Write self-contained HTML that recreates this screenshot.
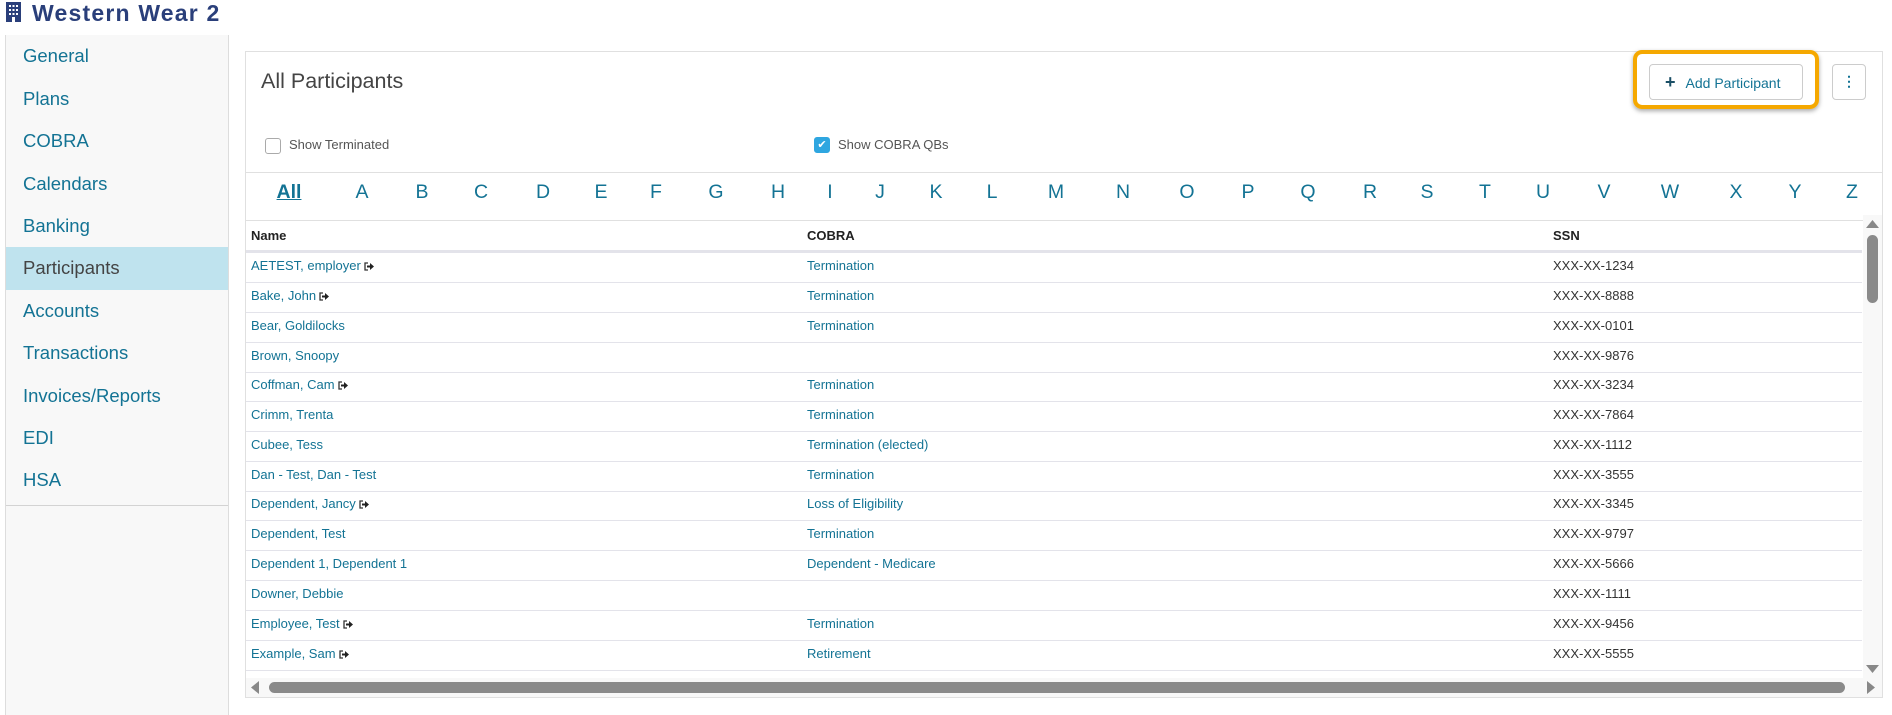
<!DOCTYPE html>
<html><head><meta charset="utf-8"><style>
*{box-sizing:border-box;margin:0;padding:0}
body{width:1892px;height:711px;background:#fff;font-family:"Liberation Sans",Arial,sans-serif;position:relative;overflow:hidden}
.abs{position:absolute}
.title{left:32px;top:0;font-size:23px;font-weight:bold;color:#2a3f7a;letter-spacing:1.2px;line-height:27px}
.side{left:5px;top:35px;width:224px;height:680px;background:#f8f8f8;border-left:1px solid #ddd;border-right:1px solid #ddd}
.side div{position:absolute;left:0;width:222px;height:43px;line-height:41px;padding-left:17px;font-size:18.5px;color:#137394}
.side .act{background:#bfe3ee;color:#444}
.side .div{top:470px;height:1px;background:#d3d3d3;padding:0}
.panel{left:245px;top:51px;width:1638px;height:647px;border:1px solid #e0e0e0}
.h1{left:261px;top:69px;font-size:21.5px;color:#444}
.cb{width:16px;height:16px;border:1px solid #aaa;border-radius:3px;background:#fff}
.cbl{font-size:13px;color:#555}
.letters{left:246px;top:172px;width:1636px;height:49px;border-top:1px solid #e0e0e0;border-bottom:1px solid #e0e0e0}
.lt{position:absolute;top:181px;font-size:19.5px;color:#137394;transform:translateX(-50%)}
.row{position:absolute;left:246px;width:1616px;height:30px;border-bottom:1px solid #e3e3ea;font-size:13px;line-height:25px;color:#137394}
.row span{position:absolute}
.c1{left:5px}.c2{left:561px}.c3{left:1307px;color:#333}
.hd{font-weight:bold;color:#222;border-bottom:3px solid #e3e3ea;line-height:30px}
.ic{display:inline-block;width:10px;height:9px;margin-left:3px;vertical-align:-1px}
</style></head><body>
<svg class="abs" style="left:6px;top:2px" width="15" height="20" viewBox="0 0 15 20"><rect width="15" height="20" fill="#2a3f7a"/><g fill="#fff"><rect x="3" y="3" width="2" height="2"/><rect x="6.5" y="3" width="2" height="2"/><rect x="10" y="3" width="2" height="2"/><rect x="3" y="7" width="2" height="2"/><rect x="6.5" y="7" width="2" height="2"/><rect x="10" y="7" width="2" height="2"/><rect x="3" y="11" width="2" height="2"/><rect x="6.5" y="11" width="2" height="2"/><rect x="10" y="11" width="2" height="2"/><rect x="6" y="15" width="3" height="5"/></g></svg>
<div class="abs title">Western Wear 2</div>
<div class="abs side">
<div style="top:0">General</div><div style="top:43px">Plans</div><div style="top:85px">COBRA</div><div style="top:128px">Calendars</div><div style="top:170px">Banking</div><div class="act" style="top:212px">Participants</div><div style="top:255px">Accounts</div><div style="top:297px">Transactions</div><div style="top:340px">Invoices/Reports</div><div style="top:382px">EDI</div><div style="top:424px">HSA</div><div class="div"></div>
</div>
<div class="abs panel"></div>
<div class="abs h1">All Participants</div>
<div class="abs" style="left:1633px;top:50px;width:186px;height:59px;border:4px solid #f5a800;border-radius:9px;box-shadow:0 2px 5px rgba(0,0,0,.35)"></div>
<div class="abs" style="left:1649px;top:64px;width:154px;height:36px;border:1px solid #ccc;border-radius:4px;font-size:14px;color:#137394;line-height:34px;padding-left:15px"><b style="color:#1a4f66;font-size:18px;margin-right:10px">+</b>Add Participant</div>
<div class="abs" style="left:1832px;top:64px;width:34px;height:36px;border:1px solid #ccc;border-radius:4px;text-align:center;line-height:32px;color:#137394;font-weight:bold;font-size:14px">⋮</div>
<div class="abs cb" style="left:265px;top:138px"></div>
<div class="abs cbl" style="left:289px;top:137px">Show Terminated</div>
<div class="abs cb" style="left:814px;top:137px;background:#2fa6e0;border-color:#2fa6e0;color:#fff;font-size:11px;text-align:center;line-height:14px">✔</div>
<div class="abs cbl" style="left:838px;top:137px">Show COBRA QBs</div>
<div class="abs letters"></div>
<div class="lt" style="left:289px;font-weight:bold;text-decoration:underline">All</div>
<div class="lt" style="left:362px">A</div><div class="lt" style="left:422px">B</div><div class="lt" style="left:481px">C</div><div class="lt" style="left:543px">D</div><div class="lt" style="left:601px">E</div><div class="lt" style="left:656px">F</div><div class="lt" style="left:716px">G</div><div class="lt" style="left:778px">H</div><div class="lt" style="left:830px">I</div><div class="lt" style="left:880px">J</div><div class="lt" style="left:936px">K</div><div class="lt" style="left:992px">L</div><div class="lt" style="left:1056px">M</div><div class="lt" style="left:1123px">N</div><div class="lt" style="left:1187px">O</div><div class="lt" style="left:1248px">P</div><div class="lt" style="left:1308px">Q</div><div class="lt" style="left:1370px">R</div><div class="lt" style="left:1427px">S</div><div class="lt" style="left:1485px">T</div><div class="lt" style="left:1543px">U</div><div class="lt" style="left:1604px">V</div><div class="lt" style="left:1670px">W</div><div class="lt" style="left:1736px">X</div><div class="lt" style="left:1795px">Y</div><div class="lt" style="left:1852px">Z</div>
<div class="row hd" style="top:221px;height:32px"><span class="c1">Name</span><span class="c2">COBRA</span><span class="c3" style="color:#222">SSN</span></div>
<svg width="0" height="0" style="position:absolute"><defs><symbol id="ex" viewBox="0 0 10 9"><path d="M4 1H1v7h3" fill="none" stroke="#333" stroke-width="1.3"/><path d="M3 3.5h3V1l4 3.5L6 8V5.5H3z" fill="#222"/></symbol></defs></svg>
<div class="row" style="top:253px"><span class="c1">AETEST, employer<svg class="ic"><use href="#ex"/></svg></span><span class="c2">Termination</span><span class="c3">XXX-XX-1234</span></div>
<div class="row" style="top:283px"><span class="c1">Bake, John<svg class="ic"><use href="#ex"/></svg></span><span class="c2">Termination</span><span class="c3">XXX-XX-8888</span></div>
<div class="row" style="top:313px"><span class="c1">Bear, Goldilocks</span><span class="c2">Termination</span><span class="c3">XXX-XX-0101</span></div>
<div class="row" style="top:343px"><span class="c1">Brown, Snoopy</span><span class="c3">XXX-XX-9876</span></div>
<div class="row" style="top:372px"><span class="c1">Coffman, Cam<svg class="ic"><use href="#ex"/></svg></span><span class="c2">Termination</span><span class="c3">XXX-XX-3234</span></div>
<div class="row" style="top:402px"><span class="c1">Crimm, Trenta</span><span class="c2">Termination</span><span class="c3">XXX-XX-7864</span></div>
<div class="row" style="top:432px"><span class="c1">Cubee, Tess</span><span class="c2">Termination (elected)</span><span class="c3">XXX-XX-1112</span></div>
<div class="row" style="top:462px"><span class="c1">Dan - Test, Dan - Test</span><span class="c2">Termination</span><span class="c3">XXX-XX-3555</span></div>
<div class="row" style="top:491px"><span class="c1">Dependent, Jancy<svg class="ic"><use href="#ex"/></svg></span><span class="c2">Loss of Eligibility</span><span class="c3">XXX-XX-3345</span></div>
<div class="row" style="top:521px"><span class="c1">Dependent, Test</span><span class="c2">Termination</span><span class="c3">XXX-XX-9797</span></div>
<div class="row" style="top:551px"><span class="c1">Dependent 1, Dependent 1</span><span class="c2">Dependent - Medicare</span><span class="c3">XXX-XX-5666</span></div>
<div class="row" style="top:581px"><span class="c1">Downer, Debbie</span><span class="c3">XXX-XX-1111</span></div>
<div class="row" style="top:611px"><span class="c1">Employee, Test<svg class="ic"><use href="#ex"/></svg></span><span class="c2">Termination</span><span class="c3">XXX-XX-9456</span></div>
<div class="row" style="top:641px"><span class="c1">Example, Sam<svg class="ic"><use href="#ex"/></svg></span><span class="c2">Retirement</span><span class="c3">XXX-XX-5555</span></div>
<div class="abs" style="left:246px;top:678px;width:1636px;height:19px;background:#f8f8f8"></div>
<div class="abs" style="left:1863px;top:215px;width:19px;height:463px;background:#f8f8f8"></div>
<div class="abs" style="left:1867px;top:235px;width:11px;height:68px;background:#8a8a8a;border-radius:6px"></div>
<svg class="abs" style="left:1866px;top:219px" width="13" height="9"><path d="M0 9L6.5 1L13 9z" fill="#888"/></svg>
<svg class="abs" style="left:1866px;top:665px" width="13" height="9"><path d="M0 0L6.5 8L13 0z" fill="#888"/></svg>
<div class="abs" style="left:269px;top:682px;width:1576px;height:11px;background:#8a8a8a;border-radius:6px"></div>
<svg class="abs" style="left:251px;top:681px" width="8" height="13"><path d="M8 0L0 6.5L8 13z" fill="#888"/></svg>
<svg class="abs" style="left:1867px;top:681px" width="8" height="13"><path d="M0 0L8 6.5L0 13z" fill="#888"/></svg>
</body></html>
